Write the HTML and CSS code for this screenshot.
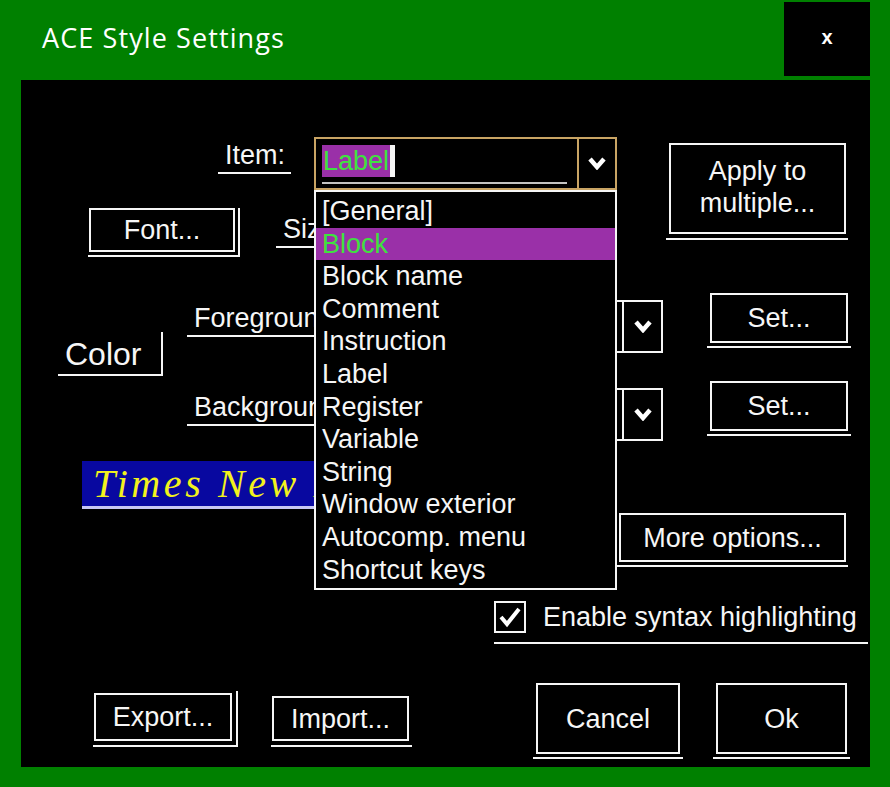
FILE: index.html
```html
<!DOCTYPE html>
<html lang="en">
<head>
    <meta charset="UTF-8">
    <title>ACE Style Settings</title>
    <link rel="stylesheet" href="styles.css">
</head>
<body>

  <div class="window">
    <div class="titlebar">
      <div class="title">ACE Style Settings</div>
      <div class="close">x</div>
    </div>

    <div class="client">

      <!-- item / font / apply -->
      <div class="top-row">
        <div class="left-col">
          <div class="lbl item-lbl">Item:</div>
          <div class="font-row">
            <div class="btn-wrap def font-wrap"><div class="btn font-btn">Font...</div></div>
            <div class="lbl size-lbl">Size:</div>
          </div>
        </div>

        <div class="combo main-combo">
          <div class="combo-field">
            <div class="combo-text"><span class="sel">Label<span class="caret"></span></span></div>
          </div>
          <div class="combo-btn">
            <svg width="18" height="13" viewBox="0 0 18 13"><polyline points="2,2 9,10 16,2" fill="none" stroke="#fff" stroke-width="4.5"/></svg>
          </div>
        </div>

        <div class="btn-wrap apply-wrap"><div class="btn apply-btn">Apply to<br>multiple...</div></div>
      </div>

      <!-- colors -->
      <div class="color-row">
        <div class="color-box">Color</div>
        <div class="color-col">
          <div class="pick-row">
            <div class="lbl pick-lbl fg-lbl">Foreground:</div>
            <div class="combo pick-combo">
              <div class="combo-field"></div>
              <div class="combo-btn">
                <svg width="18" height="13" viewBox="0 0 18 13"><polyline points="2,2 9,10 16,2" fill="none" stroke="#fff" stroke-width="4.5"/></svg>
              </div>
            </div>
            <div class="btn-wrap set-wrap"><div class="btn set-btn">Set...</div></div>
          </div>
          <div class="pick-row bg-row">
            <div class="lbl pick-lbl bg-lbl">Background:</div>
            <div class="combo pick-combo">
              <div class="combo-field"></div>
              <div class="combo-btn">
                <svg width="18" height="13" viewBox="0 0 18 13"><polyline points="2,2 9,10 16,2" fill="none" stroke="#fff" stroke-width="4.5"/></svg>
              </div>
            </div>
            <div class="btn-wrap set-wrap"><div class="btn set-btn">Set...</div></div>
          </div>
        </div>
      </div>

      <!-- preview / more -->
      <div class="preview-row">
        <div class="preview">Times New Roman</div>
        <div class="btn-wrap more-wrap"><div class="btn more-btn">More options...</div></div>
      </div>

      <div class="check-row">
        <span class="checkbox">
          <svg width="28" height="28" viewBox="0 0 28 28"><polyline points="5,14 11,21 23,6" fill="none" stroke="#fff" stroke-width="4"/></svg>
        </span>
        <span class="check-text">Enable syntax highlighting</span>
      </div>

      <!-- bottom buttons -->
      <div class="bottom-row">
        <div class="btn-wrap def export-wrap"><div class="btn export-btn">Export...</div></div>
        <div class="btn-wrap import-wrap"><div class="btn import-btn">Import...</div></div>
        <div class="btn-wrap cancel-wrap"><div class="btn dlg-btn">Cancel</div></div>
        <div class="btn-wrap ok-wrap"><div class="btn dlg-btn ok-btn">Ok</div></div>
      </div>

      <!-- open dropdown -->
      <ul class="droplist">
        <li>[General]</li>
        <li class="hot">Block</li>
        <li>Block name</li>
        <li>Comment</li>
        <li>Instruction</li>
        <li>Label</li>
        <li>Register</li>
        <li>Variable</li>
        <li>String</li>
        <li>Window exterior</li>
        <li>Autocomp. menu</li>
        <li>Shortcut keys</li>
      </ul>

    </div>
  </div>

</body>
</html>
```

FILE: styles.css
```css
* {
    box-sizing: border-box;
}

body {
    margin: 0;
    background: #008000;
    font-family: "Liberation Sans", Arial, sans-serif;
    font-size: 27px;
    color: #f6f6f6;
}

.window {
    width: 890px;
    height: 787px;
    background: #008000;
}

/* title bar */
.titlebar {
    height: 80px;
    display: flex;
}

.title {
    padding: 19px 0 0 42px;
    font-family: "Open Sans", sans-serif;
    font-size: 27px;
    letter-spacing: 1.1px;
    color: #fff;
}

.close {
    margin: 2px 20px 0 auto;
    width: 86px;
    height: 74px;
    background: #000;
    color: #fff;
    font-weight: bold;
    font-size: 20px;
    display: flex;
    align-items: center;
    justify-content: center;
    padding-bottom: 4px;
}

/* client area */
.client {
    position: relative;
    margin: 0 20px 0 21px;
    height: 687px;
    background: #000;
    overflow: hidden;
}

.lbl {
    line-height: 30px;
    height: 34px;
    padding: 0 0 2px 7px;
    border-bottom: 2px solid #f6f6f6;
    white-space: nowrap;
    overflow: hidden;
}

/* buttons: box plus a line under it */
.btn-wrap {
    border-bottom: 2px solid #f6f6f6;
    padding: 0 3px 3px 3px;
}

.btn-wrap.def {
    border-right: 2px solid #f6f6f6;
}

.btn {
    border: 2px solid #f6f6f6;
    display: flex;
    align-items: center;
    justify-content: center;
    text-align: center;
    line-height: 32px;
}

/* top row */
.top-row {
    display: flex;
    align-items: flex-start;
    padding-top: 57px;
}

.left-col {
    width: 293px;
    flex-shrink: 0;
}

.item-lbl {
    margin: 3px 0 0 197px;
    width: 73px;
}

.font-row {
    display: flex;
    align-items: flex-start;
    margin-top: 34px;
}

.font-wrap {
    margin-left: 67px;
    padding: 0 3px 3px 1px;
}

.font-btn {
    width: 146px;
    height: 44px;
}

.size-lbl {
    margin: 6px 0 0 36px;
    width: 90px;
    flex-shrink: 0;
}

.combo {
    display: flex;
    border: 2px solid #f6f6f6;
    flex-shrink: 0;
}

.combo-field {
    flex: 1;
}

.combo-btn {
    border-left: 2px solid #f6f6f6;
    display: flex;
    align-items: center;
    justify-content: center;
}

.main-combo {
    width: 303px;
    height: 53px;
    border-color: #c9a464;
}

.main-combo .combo-field {
    padding: 6px 10px 0 6px;
}

.main-combo .combo-btn {
    width: 38px;
    border-color: #c9a464;
}

.combo-text {
    border-bottom: 2px solid #c4c4c4;
    padding-bottom: 5px;
}

.sel {
    display: inline-flex;
    height: 32px;
    line-height: 32px;
    background: #9a30a8;
    color: #3fe23f;
    padding-left: 1px;
}

.caret {
    width: 5px;
    margin-left: 1px;
    background: #f6f6f6;
}

.apply-wrap {
    margin: 6px 0 0 49px;
    padding: 0 2px 4px 3px;
}

.apply-btn {
    width: 177px;
    height: 91px;
    padding-bottom: 4px;
}

/* colour row */
.color-row {
    display: flex;
    align-items: flex-start;
    margin-top: 36px;
}

.color-box {
    margin: 39px 0 0 37px;
    width: 105px;
    height: 44px;
    padding: 4px 0 0 7px;
    font-size: 32px;
    line-height: 36px;
    border-right: 2px solid #f6f6f6;
    border-bottom: 2px solid #f6f6f6;
}

.color-col {
    margin-left: 24px;
}

.pick-row {
    display: flex;
    align-items: flex-start;
}

.bg-row {
    margin-top: 28px;
}

.pick-lbl {
    width: 129px;
    flex-shrink: 0;
    margin-top: 10px;
}

.bg-lbl {
    margin-top: 11px;
}

.pick-combo {
    margin: 7px 0 0 2px;
    width: 345px;
    height: 53px;
}

.pick-combo .combo-btn {
    width: 39px;
}

.set-wrap {
    margin-left: 44px;
}

.set-btn {
    width: 138px;
    height: 50px;
}

/* preview row */
.preview-row {
    display: flex;
    align-items: flex-start;
    margin-top: 20px;
}

.preview {
    margin-left: 61px;
    width: 300px;
    height: 48px;
    background: #0808a0;
    border-bottom: 3px solid #c8c8f4;
    padding-left: 11px;
    font-family: "Liberation Serif", "Times New Roman", serif;
    font-style: italic;
    font-size: 40px;
    letter-spacing: 3.6px;
    line-height: 45px;
    color: #f2f21c;
    white-space: nowrap;
    overflow: hidden;
}

.more-wrap {
    margin: 52px 0 0 235px;
    padding: 0 2px 3px 2px;
}

.more-btn {
    width: 227px;
    height: 49px;
}

/* checkbox */
.check-row {
    display: flex;
    align-items: center;
    width: 374px;
    margin: 34px 0 0 473px;
    padding-bottom: 9px;
    border-bottom: 2px solid #f6f6f6;
}

.checkbox {
    width: 32px;
    height: 32px;
    border: 2px solid #f6f6f6;
    display: flex;
    align-items: center;
    justify-content: center;
}

.check-text {
    margin-left: 17px;
    line-height: 32px;
    white-space: nowrap;
}

/* bottom row */
.bottom-row {
    display: flex;
    align-items: flex-start;
    margin-top: 39px;
}

.export-wrap {
    margin: 8px 0 0 72px;
    padding: 2px 4px 4px 1px;
}

.export-btn {
    width: 138px;
    height: 48px;
}

.import-wrap {
    margin: 13px 0 0 33px;
    padding: 0 3px 4px 1px;
}

.import-btn {
    width: 137px;
    height: 45px;
}

.cancel-wrap {
    margin-left: 121px;
}

.ok-wrap {
    margin-left: 30px;
}

.dlg-btn {
    width: 144px;
    height: 71px;
}

.ok-btn {
    width: 131px;
}

/* open list of the item combo */
.droplist {
    position: absolute;
    left: 293px;
    top: 110px;
    width: 303px;
    height: 400px;
    margin: 0;
    padding: 3px 0 0 0;
    list-style: none;
    background: #000;
    border: 2px solid #f6f6f6;
}

.droplist li {
    height: 32.6px;
    line-height: 32.6px;
    padding-left: 6px;
    white-space: nowrap;
}

.droplist li.hot {
    background: #9a30a8;
    color: #3fe23f;
}
```
